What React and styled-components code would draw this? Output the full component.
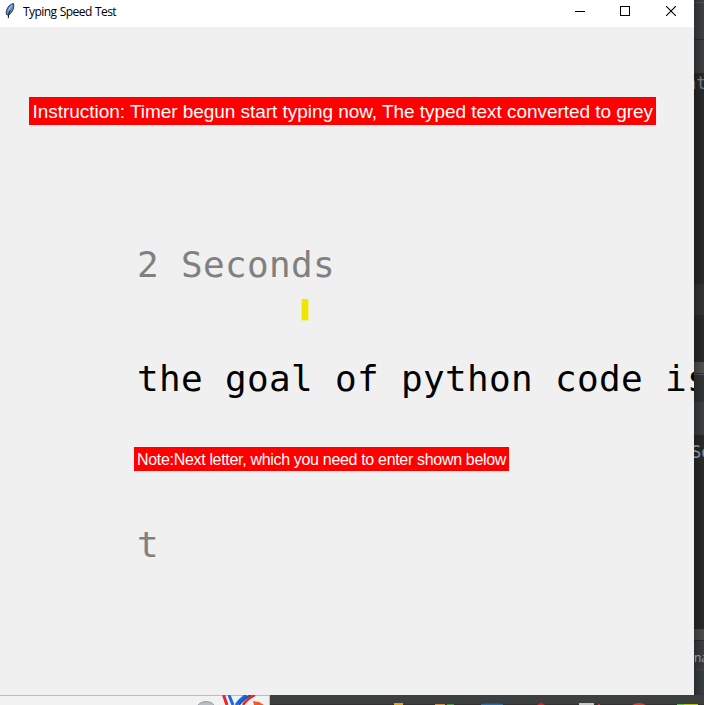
import React from "react";
import styled, { createGlobalStyle } from "styled-components";

const GlobalStyle = createGlobalStyle`
  * { box-sizing: border-box; }
  body { margin: 0; background: #2b2b2b; overflow: hidden; }
`;

const Desktop = styled.div`
  display: grid;
  grid-template-columns: 694px 10px;
  grid-template-rows: 695px 10px;
  width: 704px;
  height: 705px;
  overflow: hidden;
`;

const Window = styled.main`
  display: flex;
  flex-direction: column;
  background: #f0f0f0;
  overflow: hidden;
`;

const TitleBar = styled.header`
  display: flex;
  align-items: flex-start;
  flex: none;
  height: 27px;
  background: #fff;
`;

const AppIcon = styled.svg`
  flex: none;
  width: 12px;
  height: 17px;
  margin: 2px 0 0 4px;
`;

const Title = styled.h1`
  flex: 1;
  margin: 0 0 0 7px;
  font: 400 12px/24px "Open Sans", "Noto Sans", sans-serif;
  letter-spacing: -0.55px;
  word-spacing: 0.6px;
  color: #000;
  white-space: nowrap;
`;

const Controls = styled.div`
  display: flex;
`;

const ControlButton = styled.button`
  display: flex;
  align-items: center;
  justify-content: center;
  width: ${(p) => p.$width}px;
  height: 22px;
  padding: 0;
  border: 0;
  background: none;
`;

const Canvas = styled.section`
  display: flex;
  flex-direction: column;
  align-items: flex-start;
`;

const Banner = styled.p`
  flex: none;
  display: flex;
  align-items: center;
  width: ${(p) => p.$width}px;
  height: ${(p) => p.$height}px;
  margin: ${(p) => p.$margin};
  padding: 2px 0 0 ${(p) => p.$inset}px;
  background: #ff0000;
  color: #fff;
  font-family: "Liberation Sans", Arial, sans-serif;
  font-size: ${(p) => p.$size}px;
  letter-spacing: ${(p) => p.$spacing}px;
  white-space: nowrap;
`;

const MonoLine = styled.p`
  flex: none;
  height: 48px;
  margin: ${(p) => p.$margin};
  color: ${(p) => p.$color};
  font: 400 36px/47px Consolas, "DejaVu Sans Mono", monospace;
  letter-spacing: 0.33px;
  white-space: pre;
`;

const Caret = styled.span`
  flex: none;
  width: 8px;
  height: 22px;
  margin: 10px 0 0 301px;
  border: solid #f0eda0;
  border-width: 0 1px 1px 1px;
  background: #f2e600;
`;

const EditorStrip = styled.aside`
  display: flex;
  flex-direction: column;
  overflow: hidden;
`;

const StripBand = styled.div`
  flex: none;
  height: ${(p) => p.$height}px;
  overflow: hidden;
  background: linear-gradient(90deg, #0004, #0000 9px), ${(p) => p.$color};
`;

const Code = styled.span`
  display: block;
  margin: ${(p) => p.$top}px 0 0 ${(p) => p.$left}px;
  font: 400 ${(p) => p.$size}px/20px ${(p) => p.$font};
  color: ${(p) => p.$color};
  white-space: nowrap;
`;

const Taskbar = styled.footer`
  grid-column: 1 / -1;
  display: flex;
  background: #3c3f40;
`;

const SearchBox = styled.div`
  width: 270px;
  height: 10px;
  border-top: 1px solid #b9bcb8;
  border-right: 1px solid #b9bcb8;
  background: #f2f2f2;
`;

const SearchArt = styled.svg`
  display: block;
  width: 74px;
  height: 10px;
  margin: -1px 0 0 195px;
`;

const TaskIcons = styled.svg`
  width: 434px;
  height: 10px;
`;

const mono = '"DejaVu Sans Mono", monospace';
const sans = '"Open Sans", sans-serif';

const bands = [
  { height: 2, color: "#3c3f41" },
  { height: 1, color: "#505355" },
  { height: 36, color: "#3c3f41" },
  { height: 1, color: "#2b2d2e" },
  { height: 33, color: "#3c3f41" },
  { height: 211, color: "#292929", text: "nt", top: 0, left: -8, size: 17, font: mono, ink: "#70757a" },
  { height: 31, color: "#333333" },
  { height: 47, color: "#292929" },
  { height: 11, color: "#4e4e4e" },
  { height: 1, color: "#323232" },
  { height: 1, color: "#555555" },
  { height: 27, color: "#313335" },
  { height: 33, color: "#3c3f41" },
  { height: 194, color: "#292929", text: "Se", top: 7, left: -3, size: 17, font: mono, ink: "#8a9198" },
  { height: 11, color: "#4a4a4a" },
  { height: 1, color: "#2d2d2d" },
  { height: 28, color: "#3a3d3f", text: "na", top: 7, left: 0, size: 12, font: sans, ink: "#9ba0a4" },
  { height: 1, color: "#454849" },
  { height: 25, color: "#393c3e" },
];

export default function App() {
  return (
    <>
      <GlobalStyle />
      <Desktop>
        <Window>
          <TitleBar>
            <AppIcon viewBox="0 0 12 17" aria-hidden="true">
              <path d="M2.4 12.5C1.5 7.5 5 2.2 9.4 1.6C10.7 4.6 8.8 10.8 4.2 13.2Z" fill="#5c91cf" stroke="#1b2a3c" strokeWidth="0.9" />
              <path d="M6.2 8.5C4.9 11 4.4 13 4.3 16.2" fill="none" stroke="#111" strokeWidth="1" />
              <path d="M7.8 3.2L4.3 8.8" stroke="#a9cdf2" strokeWidth="1" />
            </AppIcon>
            <Title>Typing Speed Test</Title>
            <Controls>
              <ControlButton $width={44} aria-label="Minimize">
                <svg width="10" height="10" shapeRendering="crispEdges"><path d="M0 5.5H10" stroke="#000" /></svg>
              </ControlButton>
              <ControlButton $width={46} aria-label="Maximize">
                <svg width="10" height="10" shapeRendering="crispEdges"><rect x=".5" y=".5" width="9" height="9" fill="none" stroke="#000" /></svg>
              </ControlButton>
              <ControlButton $width={46} aria-label="Close">
                <svg width="10" height="10"><path d="M0 0L10 10M10 0L0 10" stroke="#000" strokeWidth="1.1" /></svg>
              </ControlButton>
            </Controls>
          </TitleBar>
          <Canvas>
            <Banner $width={627} $height={28} $margin="70px 0 0 29px" $inset={3.6} $size={19} $spacing={-0.045}>
              Instruction: Timer begun start typing now, The typed text converted to grey
            </Banner>
            <MonoLine $color="#808080" $margin="116px 0 0 137px">2 Seconds</MonoLine>
            <Caret />
            <MonoLine $color="#000" $margin="34px 0 0 137px">the goal of python code is</MonoLine>
            <Banner $width={375} $height={24} $margin="44px 0 0 134px" $inset={3} $size={16} $spacing={-0.32}>
              Note:Next letter, which you need to enter shown below
            </Banner>
            <MonoLine $color="#808080" $margin="50px 0 0 137px">t</MonoLine>
          </Canvas>
        </Window>
        <EditorStrip>
          {bands.map((b, i) => (
            <StripBand key={i} $height={b.height} $color={b.color}>
              {b.text && (
                <Code $top={b.top} $left={b.left} $size={b.size} $font={b.font} $color={b.ink}>{b.text}</Code>
              )}
            </StripBand>
          ))}
        </EditorStrip>
        <Taskbar>
          <SearchBox>
            <SearchArt viewBox="0 0 74 10" aria-hidden="true">
              <ellipse cx="11" cy="13" rx="9" ry="6.5" fill="#b9bcc3" stroke="#999da3" />
              <path d="M28.5 0L32 10" stroke="#e3262e" strokeWidth="3" />
              <path d="M34 0L38 10M51.5 0Q45 4 41 10" fill="none" stroke="#1769e0" strokeWidth="3" />
              <path d="M56 0Q48 4 44 10" fill="none" stroke="#1c4fae" strokeWidth="2" />
              <path d="M60 0Q52 4 48 10" fill="none" stroke="#e3262e" strokeWidth="2.5" />
              <path d="M58 6L64 7L69 10H59Z" fill="#ee5a24" />
            </SearchArt>
          </SearchBox>
          <TaskIcons viewBox="0 0 434 10" aria-hidden="true">
            <rect y="9" width="434" height="1" fill="#33302f" />
            <rect x="124" y="8" width="9" height="2" fill="#eaa60b" />
            <rect x="165" y="9" width="10" height="1" fill="#d98e37" />
            <rect x="177" y="9" width="7" height="1" fill="#3f9c35" />
            <rect x="211" y="9" width="22" height="1" fill="#2b6ca8" />
            <rect x="214" y="8" width="16" height="1" fill="#31536d" />
            <path d="M267 10L271 7.5L275 10Z" fill="#d92323" />
            <rect x="309" y="8" width="15" height="2" fill="#c9c9c9" />
            <rect x="328" y="9" width="2" height="1" fill="#c33" />
            <path d="M362 10Q369 6 376 10Z" fill="#e33b2e" />
            <rect x="407" y="9" width="21" height="1" fill="#b5c900" />
            <rect x="407" y="9" width="7" height="1" fill="#55c936" />
          </TaskIcons>
        </Taskbar>
      </Desktop>
    </>
  );
}
